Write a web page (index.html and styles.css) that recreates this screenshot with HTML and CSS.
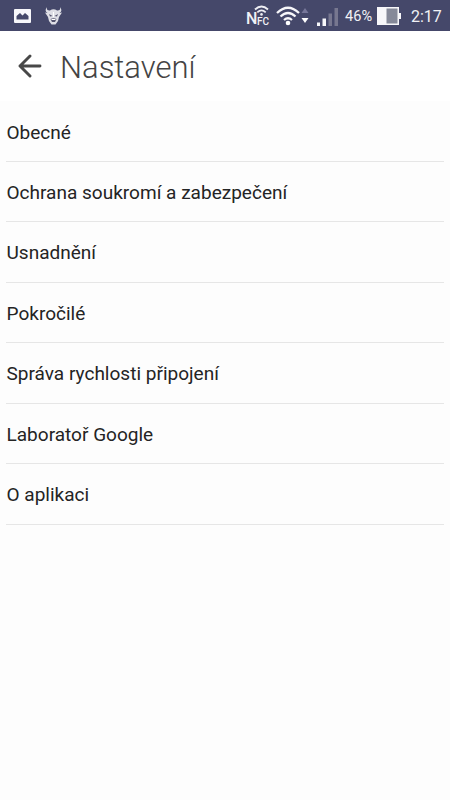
FILE: index.html
```html
<!DOCTYPE html>
<html lang="cs">
<head>
<meta charset="utf-8">
<title>Nastavení</title>
<link rel="stylesheet" href="styles.css">
</head>
<body>
<div class="status">
  <svg class="picture" width="17" height="14" viewBox="0 0 17 14"><path fill="#f7f7fa" fill-rule="evenodd" d="M1 0H16Q17 0 17 1V13Q17 14 16 14H1Q0 14 0 13V1Q0 0 1 0ZM2.500 10.500V7L6 4L8.500 6.500L11 4L14.500 7V10.500Z"/></svg>
  <svg class="demon" width="17" height="18" viewBox="0 0 17 18"><path fill="#dedee5" d="M2 0Q1 4 5 3.500Q8.500 1 12 3.500Q16 4 15 0Q18 4 14.500 6L17 5.500L14 10L13 14L10.500 17.500H6.500L4 14L3 10L0 5.500L2.500 6Q-1 4 2 0Z"/><path d="M4 7L7.500 9L5 9.500ZM13 7L9.500 9L12 9.500ZM5.500 12Q8.500 10.500 11.500 12L10 15H7Z" fill="#55556f"/><path d="M6.500 12.500H10.500M8.500 5V10" stroke="#fff" fill="none"/></svg>
  <div class="nfc">
    <svg width="16" height="12" viewBox="0 0 16 12" fill="none" stroke="#eeeef3" stroke-width="1.800"><path d="M1 4.500Q7.500-1.500 14 4.500M3.300 7.300Q7.500 3.500 11.700 7.300"/><circle cx="7.500" cy="9.400" r="1.300" fill="#eeeef3" stroke="none"/></svg>
    <span class="nfc-n">N</span><span class="nfc-fc">FC</span>
  </div>
  <svg class="wifi" width="34" height="20" viewBox="0 0 34 20"><g fill="none" stroke="#f7f7fa" stroke-width="2.300"><path d="M1 7Q12-3.500 23 7M4.500 10.500Q12 3.500 19.500 10.500M8 14Q12 10.500 16 14"/></g><circle cx="12" cy="17" r="2.300" fill="#fff"/><path d="M25.500 7L29 2L32.500 7Z" fill="#77779a"/><path d="M25.500 12H32.500L29 17Z" fill="#fff"/></svg>
  <svg class="signal" width="22" height="18" viewBox="0 0 22 18"><path d="M0 14.500H3V18H0ZM5.500 10.500H9V18H5.500Z" fill="#f7f7fa"/><path d="M11.500 5.500H15V18H11.500ZM17.500 0H21V18H17.500Z" fill="#77778f"/></svg>
  <span class="percent">46%</span>
  <svg class="battery" width="24" height="18" viewBox="0 0 24 18"><path d="M0 0H22V6H24V12H22V18H0Z" fill="#f7f7fa"/><path d="M9.500 1.500H20.500V16.500H9.500Z" fill="#858999"/></svg>
  <span class="clock">2:17</span>
</div>
<header class="header">
  <svg class="back" width="24" height="24" viewBox="0 0 24 24"><path d="M22 12H2M12 2L2 12L12 22" fill="none" stroke="#484848" stroke-width="2.900" stroke-linecap="round" stroke-linejoin="round"/></svg>
  <h1>Nastavení</h1>
</header>
<ul class="list">
  <li>Obecné</li>
  <li>Ochrana soukromí a zabezpečení</li>
  <li>Usnadnění</li>
  <li>Pokročilé</li>
  <li>Správa rychlosti připojení</li>
  <li>Laboratoř Google</li>
  <li>O aplikaci</li>
</ul>
</body>
</html>
```
FILE: styles.css
```css
* { box-sizing: border-box; }
body { margin: 0; height: 800px; overflow: hidden; background: #fdfdfd; font-family: Roboto, sans-serif; color: #242424; }
.status { display: flex; align-items: flex-start; height: 31px; padding-left: 14px; background: #45486a; color: #f1f1f5; }
.status svg { display: block; flex: none; }
.picture { margin-top: 9px; }
.demon { margin: 7px 0 0 14px; }
.nfc { position: relative; width: 24px; height: 25px; margin-left: 184px; flex: none; font-weight: 500; }
.nfc svg { position: absolute; left: 8px; top: 5px; }
.nfc-n, .nfc-fc { position: absolute; line-height: 1; }
.nfc-n { left: 0; top: 11px; font-size: 16px; }
.nfc-fc { left: 11px; top: 17px; font-size: 10px; }
.wifi { margin: 6px 0 0 6px; }
.signal { margin: 8px 0 0 7px; }
.percent { width: 32px; margin-left: 6px; font-size: 14.600px; line-height: 33px; }
.battery { margin-top: 7px; }
.clock { margin-left: 10px; font-size: 16px; line-height: 33px; }
.header { display: flex; align-items: center; height: 70px; padding-left: 18px; background: #fff; }
.header h1 { margin: 4px 0 0 18px; font-size: 31px; font-weight: 300; line-height: 40px; color: #444; }
.list { margin: 0; padding: 0.600px 6px 0; list-style: none; }
.list li { height: 60.430px; border-bottom: 1px solid #e6e6e6; padding-left: 0.500px; font-size: 19.050px; line-height: 61.500px; white-space: nowrap; }
```
